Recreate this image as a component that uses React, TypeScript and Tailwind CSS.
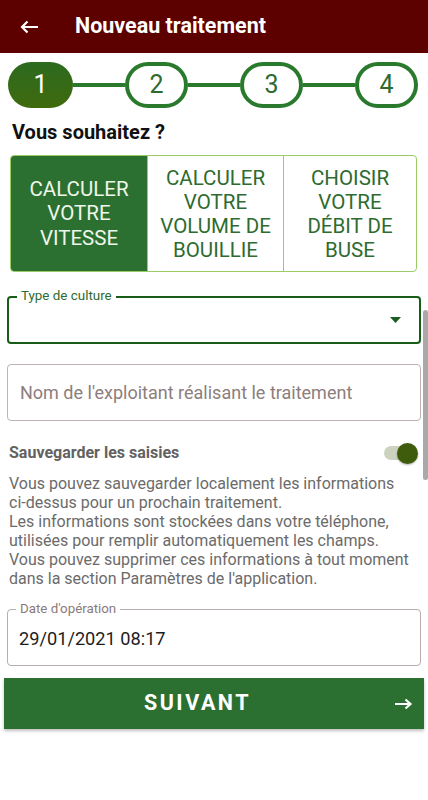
import React from "react";

export default function App() {
  const font = { fontFamily: "Roboto, 'Noto Sans', Arial, sans-serif" };
  const lines = [
    "Vous pouvez sauvegarder localement les informations",
    "ci-dessus pour un prochain traitement.",
    "Les informations sont stockées dans votre téléphone,",
    "utilisées pour remplir automatiquement les champs.",
    "Vous pouvez supprimer ces informations à tout moment",
    "dans la section Paramètres de l'application.",
  ];
  return (
    <div className="relative w-[428px] h-[800px] bg-white overflow-hidden" style={font}>
      {/* Header */}
      <div className="h-[53px] bg-[#5c0000] flex items-center">
        <svg className="ml-[20px]" width="19" height="14" viewBox="0 0 19 14" fill="none">
          <path d="M18 7H2M7.5 1.5L2 7l5.5 5.5" stroke="white" strokeWidth="2.2" />
        </svg>
        <div className="ml-[36px] text-white text-[21.5px] font-bold">Nouveau traitement</div>
      </div>

      {/* Stepper */}
      <div className="mt-[9px] h-[46px] flex items-center pl-[8px] pr-[10px]">
        <div className="w-[65px] h-[46px] rounded-[23px] bg-gradient-to-b from-[#2b6a1e] to-[#3f6a0c] flex items-center justify-center text-white text-[25px]">1</div>
        <div className="flex-1 h-[4px] bg-[#2a7a2e]" />
        <div className="w-[63px] h-[46px] rounded-[23px] border-[4px] border-[#2a7a2e] flex items-center justify-center text-[#2e6b30] text-[25px]">2</div>
        <div className="flex-1 h-[4px] bg-[#2a7a2e]" />
        <div className="w-[63px] h-[46px] rounded-[23px] border-[4px] border-[#2a7a2e] flex items-center justify-center text-[#2e6b30] text-[25px]">3</div>
        <div className="flex-1 h-[4px] bg-[#2a7a2e]" />
        <div className="w-[63px] h-[46px] rounded-[23px] border-[4px] border-[#2a7a2e] flex items-center justify-center text-[#2e6b30] text-[25px]">4</div>
      </div>

      {/* Question */}
      <div className="mt-[12px] ml-[12px] text-[20px] font-bold text-[#111] leading-[24px]">Vous souhaitez ?</div>

      {/* Segmented choice */}
      <div className="mt-[11px] ml-[10px] mr-[11px] h-[117px] flex rounded-[4px] border border-[#9ccc65] overflow-hidden">
        <div className="w-[136px] bg-[#2c7031] flex items-center justify-center text-center text-[#eef7ea] text-[20.5px] leading-[24.5px]">
          CALCULER<br />VOTRE<br />VITESSE
        </div>
        <div className="w-[136px] border-l border-[#9ccc65] flex items-center justify-center text-center text-[#2e6b30] text-[20.5px] leading-[24px]">
          CALCULER<br />VOTRE<br />VOLUME DE<br />BOUILLIE
        </div>
        <div className="flex-1 border-l border-[#9ccc65] flex items-center justify-center text-center text-[#2e6b30] text-[20.5px] leading-[24px]">
          CHOISIR<br />VOTRE<br />DÉBIT DE<br />BUSE
        </div>
      </div>

      {/* Select */}
      <div className="relative mt-[24px] mx-[7px] h-[48px] rounded-[4px] border-[2px] border-[#175c17] flex items-center justify-end pr-[18px]">
        <div className="absolute left-[8px] top-[-10px] bg-white px-[4px] text-[13.4px] leading-[16px] text-[#2e6b30]">Type de culture</div>
        <svg width="11" height="6" viewBox="0 0 11 6"><path d="M0 0h11L5.5 6z" fill="#1b5e20" /></svg>
      </div>

      {/* Input */}
      <div className="mt-[20px] mx-[7px] h-[57px] rounded-[4px] border border-[#bdb3b3] flex items-center pl-[12px] text-[18px] text-[#8d7d7d]">
        Nom de l'exploitant réalisant le traitement
      </div>

      {/* Save toggle */}
      <div className="mt-[21px] ml-[9px] mr-[10px] flex items-center justify-between h-[22px]">
        <div className="text-[16px] font-bold text-[#626262]">Sauvegarder les saisies</div>
        <div className="relative w-[34px] h-[22px] flex items-center">
          <div className="w-[28px] h-[14px] rounded-full bg-[#cbd3bf]" />
          <div className="absolute right-0 top-[1px] w-[21px] h-[21px] rounded-full bg-[#3f5c0c] shadow-[0_1px_2px_rgba(0,0,0,0.3)]" />
        </div>
      </div>

      <div className="mt-[10px] ml-[9px] text-[16px] leading-[19px] text-[#6b6b6b]">
        {lines.map((l) => (
          <div key={l} className="whitespace-nowrap">{l}</div>
        ))}
      </div>

      {/* Date */}
      <div className="relative mt-[21px] mx-[7px] h-[57px] rounded-[4px] border border-[#b8aeae] flex items-center pl-[11px] pt-[2px] text-[18.2px] text-[#1d1d1d]">
        <div className="absolute left-[8px] top-[-9px] bg-white px-[4px] text-[13.3px] leading-[16px] text-[#8a7a7a]">Date d'opération</div>
        29/01/2021 08:17
      </div>

      {/* Button */}
      <div className="mt-[12px] mx-[4px] h-[51px] bg-[#2c7031] shadow-[0_2px_3px_rgba(0,0,0,0.25)] flex items-center">
        <div className="flex-1 text-center pl-[6px] text-white text-[21.5px] font-bold tracking-[2.5px]">SUIVANT</div>
        <svg className="mr-[11px] ml-[10px]" width="18" height="12" viewBox="0 0 18 12" fill="none">
          <path d="M0 6h15M10.5 1.5L15.5 6l-5 4.5" stroke="white" strokeWidth="2.2" />
        </svg>
      </div>

      {/* Scrollbar */}
      <div className="absolute right-[0px] top-[310px] w-[5px] h-[170px] rounded-full bg-[#a9a9a9]" />
    </div>
  );
}
